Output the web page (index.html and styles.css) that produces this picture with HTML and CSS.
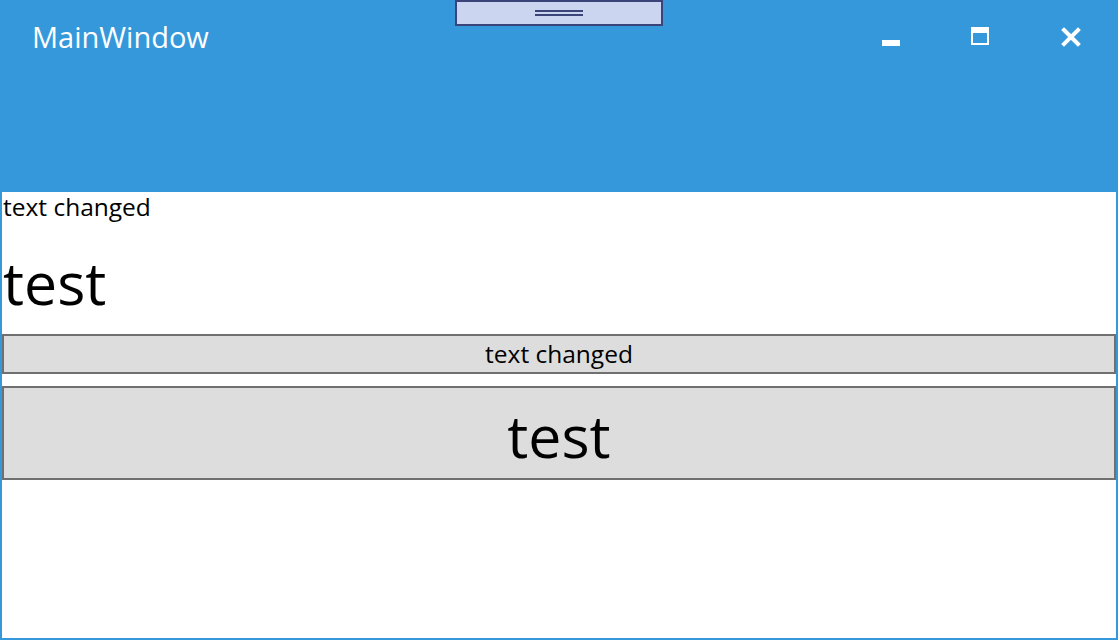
FILE: index.html
```html
<!DOCTYPE html>
<html>
<head>
<meta charset="utf-8">
<title>MainWindow</title>
<link rel="stylesheet" href="styles.css">
</head>
<body>
<div class="window">
  <div class="titlebar">
    <div class="title">MainWindow</div>
    <div class="controls">
      <div class="ctl">
        <svg width="20" height="20" viewBox="0 0 20 20"><rect x="1" y="13" width="18" height="6" fill="#fff"/></svg>
      </div>
      <div class="ctl">
        <svg width="20" height="20" viewBox="0 0 20 20"><rect x="1" y="1" width="16" height="16" fill="none" stroke="#fff" stroke-width="2"/><rect x="0" y="0" width="18" height="6" fill="#fff"/></svg>
      </div>
      <div class="ctl">
        <svg width="20" height="20" viewBox="0 0 20 20"><path d="M3 3 L17 17 M17 3 L3 17" stroke="#fff" stroke-width="4" stroke-linecap="square"/></svg>
      </div>
    </div>
    <div class="grip"><span class="grip-line"></span><span class="grip-line"></span></div>
  </div>
  <div class="content">
    <div class="label-small">text changed</div>
    <div class="label-big">test</div>
    <div class="btn btn-small">text changed</div>
    <div class="btn btn-big">test</div>
  </div>
</div>
</body>
</html>
```

FILE: styles.css
```css
* { box-sizing: border-box; }
html, body { margin: 0; padding: 0; background: #fff; }
body { font-family: "Open Sans", "Noto Sans", sans-serif; color: #000; }

.window {
  width: 1118px;
  height: 640px;
  border: 2px solid #3598db;
  border-top: 0;
  display: flex;
  flex-direction: column;
  background: #fff;
}

.titlebar {
  position: relative;
  height: 192px;
  margin: 0 -2px;
  padding: 2px 2px 0 2px;
  background: #3598db;
  display: flex;
  align-items: flex-start;
  justify-content: space-between;
}

.title {
  color: #fff;
  font-size: 29px;
  line-height: 40px;
  padding: 15px 0 0 30px;
}

.controls { display: flex; }
.ctl {
  width: 90px;
  height: 70px;
  display: flex;
  align-items: center;
  justify-content: center;
}
.ctl svg { display: block; }

.grip {
  position: absolute;
  left: 455px;
  top: 0;
  width: 208px;
  height: 26px;
  background: #cbd5f0;
  border: 2px solid #3a4478;
  display: flex;
  flex-direction: column;
  align-items: center;
  padding-top: 8px;
  gap: 2px;
}
.grip-line {
  display: block;
  width: 48px;
  height: 2px;
  background: #3a4478;
}

.content {
  display: flex;
  flex-direction: column;
  padding: 0;
}

.label-small {
  font-size: 24.5px;
  line-height: 29px;
  height: 32px;
  padding-left: 1px;
}

.label-big {
  font-size: 59px;
  line-height: 83px;
  height: 110px;
  padding: 17px 0 0 1px;
}

.btn {
  background: #dddddd;
  border: 2px solid #707070;
  display: flex;
  align-items: center;
  justify-content: center;
}
.btn-small {
  height: 40px;
  font-size: 24.5px;
  line-height: 32px;
  padding-bottom: 1px;
}
.btn-big {
  margin-top: 12px;
  height: 94px;
  font-size: 59px;
  line-height: 83px;
  padding-top: 5px;
}
```
